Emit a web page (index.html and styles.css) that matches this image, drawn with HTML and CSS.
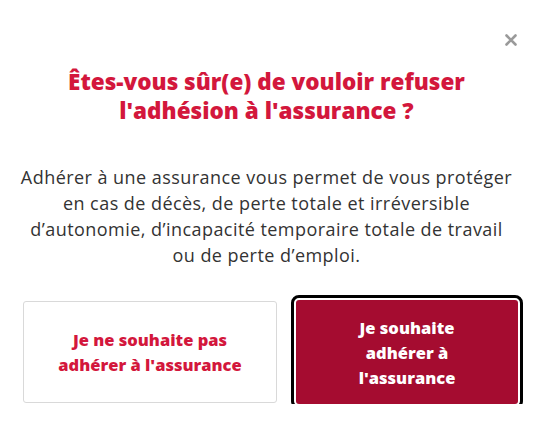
FILE: index.html
```html
<!DOCTYPE html>
<html lang="fr">
<head>
  <meta charset="UTF-8" />
  <meta name="viewport" content="width=device-width, initial-scale=1.0"/>
  <title>Refus de l'assurance</title>
  <link rel="stylesheet" href="styles.css">
</head>
<body>

<div class="modal">
  <button class="close-btn" aria-label="Fermer">
    <svg width="12" height="12" viewBox="0 0 12 12">
      <path d="M1.5 1.5 L10.5 10.5 M10.5 1.5 L1.5 10.5" stroke="#9a9a9a" stroke-width="2.6" stroke-linecap="round"/>
    </svg>
  </button>

  <h2 class="modal-title">Êtes-vous sûr(e) de vouloir refuser<br>l'adhésion à l'assurance ?</h2>

  <p class="modal-text">Adhérer à une assurance vous permet de vous protéger<br>en cas de décès, de perte totale et irréversible<br>d’autonomie, d’incapacité temporaire totale de travail<br>ou de perte d’emploi.</p>

  <div class="actions">
    <button class="btn btn-refuse">Je ne souhaite pas<br>adhérer à l'assurance</button>
    <button class="btn btn-accept">Je souhaite<br>adhérer à<br>l'assurance</button>
  </div>
</div>

</body>
</html>
```

FILE: styles.css
```css
body {
  margin: 0;
  font-family: "Open Sans", sans-serif;
  background: #fff;
}
.modal {
  position: relative;
  padding: 67px 8px 0;
  text-align: center;
}
.close-btn {
  position: absolute;
  top: 34px;
  right: 16px;
  padding: 0;
  border: none;
  background: none;
  cursor: pointer;
}
.modal-title {
  margin: 0;
  font-size: 22.5px;
  line-height: 29px;
  font-weight: 800;
  color: #d3173c;
}
.modal-text {
  margin: 39px 0 0;
  font-size: 18px;
  letter-spacing: 0.45px;
  line-height: 26px;
  color: #333;
}
.actions {
  display: flex;
  justify-content: center;
  align-items: center;
  gap: 19px;
  margin-top: 32px;
  padding-left: 8px;
}
.btn {
  font-family: inherit;
  font-weight: 800;
  font-size: 16.5px;
  line-height: 25px;
  border-radius: 3px;
  cursor: pointer;
}
.btn-refuse {
  width: 254px;
  height: 102px;
  background: #fff;
  color: #d3173c;
  border: 1px solid #d9d9d9;
}
.btn-accept {
  width: 222px;
  height: 104px;
  background: #a50c30;
  color: #fff;
  border: none;
  outline: 3px solid #000;
  outline-offset: 2px;
}
```
